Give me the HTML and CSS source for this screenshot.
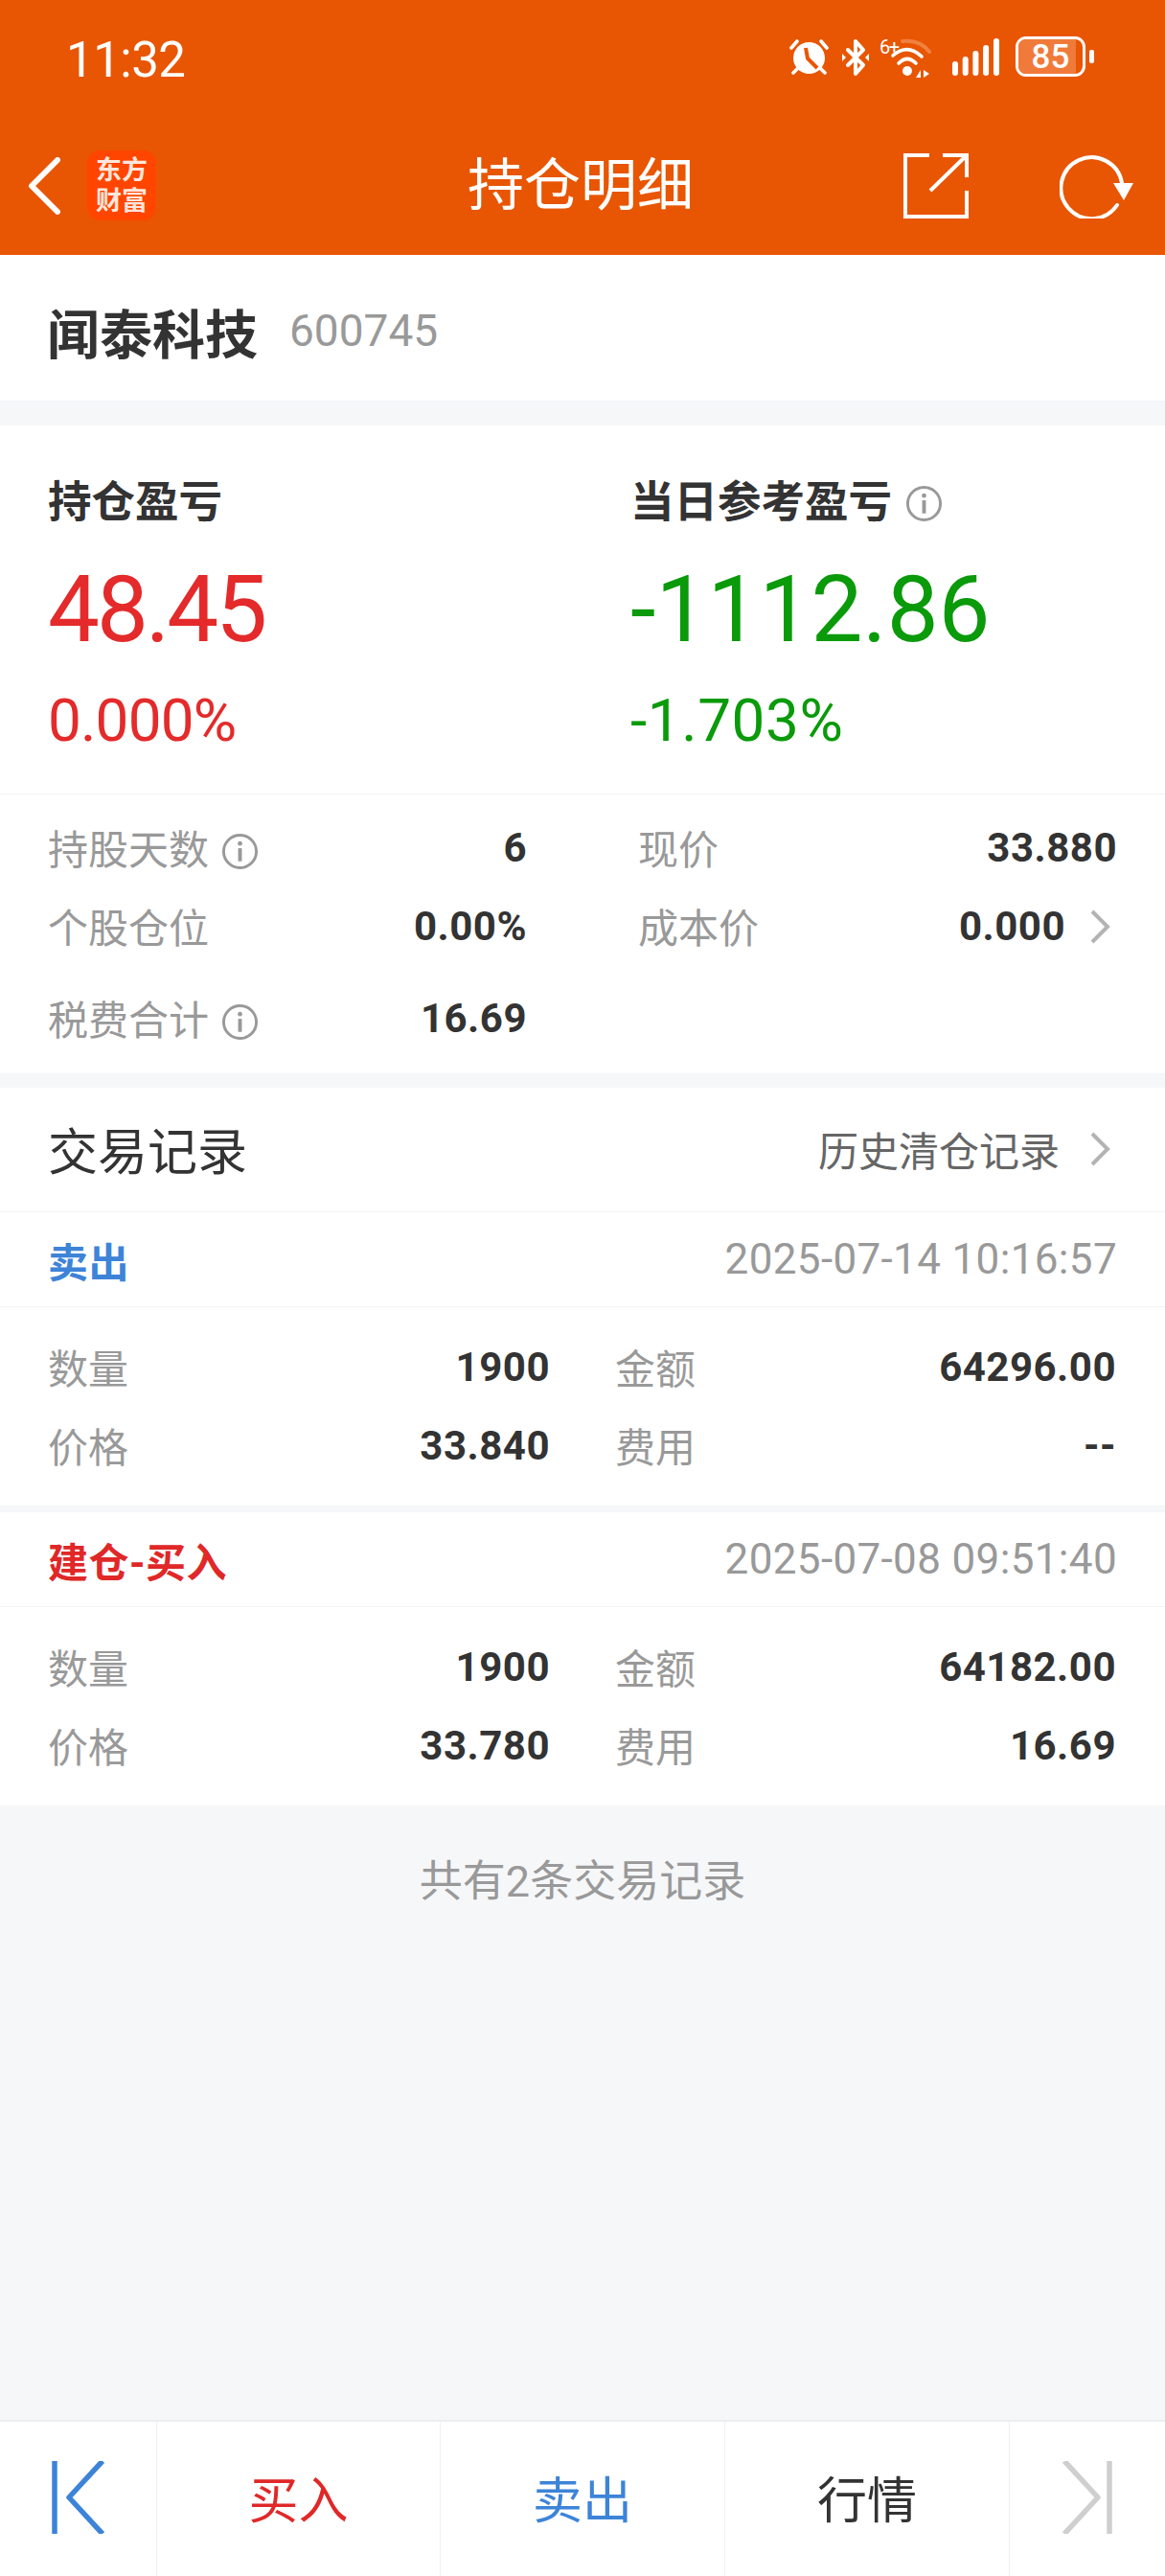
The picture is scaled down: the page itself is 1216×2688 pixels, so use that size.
FILE: index.html
```html
<!DOCTYPE html>
<html lang="zh-CN">
<head>
  <meta charset="UTF-8">
  <meta name="viewport" content="width=device-width, initial-scale=1.0">
  <title>持仓明细</title>
  <link rel="stylesheet" href="styles.css">
</head>
<body>
  <div class="page">
    <!-- Orange header -->
    <header class="top">
      <div class="status">
        <span class="clock">11:32</span>
        <div class="status-icons">
          <svg class="ic-alarm" width="41" height="38" viewBox="0 0 41 38" fill="none">
            <path d="M2 10 L8 3 M39 10 L33 3 M4 36 L8 32 M37 36 L33 32" stroke="#fff" stroke-width="3.6" stroke-linecap="round"/>
            <circle cx="20.5" cy="20.5" r="16.5" fill="#fff"/>
            <path d="M17 10 L19 21 L29 31" stroke="#e85603" stroke-width="4" fill="none"/>
          </svg>
          <svg class="ic-bt" width="28" height="40" viewBox="0 0 28 40" fill="none">
            <path d="M6 12 L22 28 L14 37 L14 3 L22 12 L6 28" stroke="#fff" stroke-width="4" stroke-linejoin="round" stroke-linecap="round"/>
            <path d="M0 16 L4 20 L0 24 Z M28 16 L24 20 L28 24 Z" fill="#fff"/>
          </svg>
          <div class="wifi">
            <span class="wifi-6">6+</span>
            <svg width="54" height="42" viewBox="0 0 54 42" fill="none">
              <path d="M24 3 Q42 1 52 14" stroke="#f0803f" stroke-width="4" stroke-linecap="round"/>
              <path d="M14 18 Q29 5 44 19" stroke="#fff" stroke-width="3.6" stroke-linecap="round"/>
              <path d="M20 26 Q29 17 38 26" stroke="#fff" stroke-width="3.6" stroke-linecap="round"/>
              <circle cx="29" cy="34" r="5" fill="#fff"/>
              <path d="M38 41 L43 33 V41 Z M46 33 L52 37 L46 41 Z" fill="#fff"/>
            </svg>
          </div>
          <svg class="ic-signal" width="49" height="39" viewBox="0 0 49 39" fill="#fff">
            <rect x="0" y="24" width="6" height="15" rx="3"/>
            <rect x="10.7" y="19" width="6" height="20" rx="3"/>
            <rect x="21.4" y="13" width="6" height="26" rx="3"/>
            <rect x="32.1" y="7" width="6" height="32" rx="3"/>
            <rect x="43" y="0" width="6" height="39" rx="3"/>
          </svg>
          <div class="battery">
            <div class="battery-body"><span class="battery-fill"></span><span class="battery-num">85</span></div>
            <span class="battery-tip"></span>
          </div>
        </div>
      </div>
      <div class="nav">
        <div class="nav-left">
          <svg width="34" height="60" viewBox="0 0 34 60" fill="none">
            <path d="M31 3 L4 30 L31 57" stroke="#fff" stroke-width="6" stroke-linecap="round" stroke-linejoin="round"/>
          </svg>
          <div class="logo"><span>东方<br>财富</span></div>
        </div>
        <h1>持仓明细</h1>
        <div class="nav-right">
          <svg width="68" height="68" viewBox="0 0 68 68" fill="none" stroke="#fff" stroke-width="4">
            <path d="M27 2 H2 V66 H66 V39"/>
            <path d="M41 2 H66 V25"/>
            <path d="M28 39 L66 2"/>
          </svg>
          <svg width="77" height="68" viewBox="0 0 77 68" fill="none">
            <path d="M65 31 A32 32 0 1 0 60 54" stroke="#fff" stroke-width="4" stroke-linecap="round"/>
            <path d="M56 31 H77 L67 49 Z" fill="#fff"/>
          </svg>
        </div>
      </div>
    </header>

    <section class="stock">
      <span class="stock-name">闻泰科技</span>
      <span class="stock-code">600745</span>
    </section>

    <!-- Profit summary -->
    <section class="card summary">
      <div class="pnl">
        <div class="pnl-col">
          <div class="pnl-label">持仓盈亏</div>
          <div class="pnl-value up">48.45</div>
          <div class="pnl-rate up">0.000%</div>
        </div>
        <div class="pnl-col">
          <div class="pnl-label">当日参考盈亏
            <svg class="info" viewBox="0 0 40 40" fill="none"><circle cx="20" cy="20" r="17.5" stroke="#999" stroke-width="3"/><circle cx="20" cy="11.5" r="2.4" fill="#999"/><rect x="18" y="16.5" width="4" height="14" fill="#999"/></svg>
          </div>
          <div class="pnl-value down">-1112.86</div>
          <div class="pnl-rate down">-1.703%</div>
        </div>
      </div>
      <div class="facts">
        <div class="fact">
          <span class="key">持股天数<svg class="info" viewBox="0 0 40 40" fill="none"><circle cx="20" cy="20" r="17.5" stroke="#999" stroke-width="3"/><circle cx="20" cy="11.5" r="2.4" fill="#999"/><rect x="18" y="16.5" width="4" height="14" fill="#999"/></svg></span>
          <span class="val">6</span>
        </div>
        <div class="fact">
          <span class="key">现价</span>
          <span class="val">33.880</span>
        </div>
        <div class="fact">
          <span class="key">个股仓位</span>
          <span class="val">0.00%</span>
        </div>
        <div class="fact">
          <span class="key">成本价</span>
          <span class="val val-link">0.000
            <svg class="chev chev-near" width="24" height="36" viewBox="0 0 24 36" fill="none"><path d="M4 2 L20 18 L4 34" stroke="#b3b3b3" stroke-width="4"/></svg>
          </span>
        </div>
        <div class="fact fact-last">
          <span class="key">税费合计<svg class="info" viewBox="0 0 40 40" fill="none"><circle cx="20" cy="20" r="17.5" stroke="#999" stroke-width="3"/><circle cx="20" cy="11.5" r="2.4" fill="#999"/><rect x="18" y="16.5" width="4" height="14" fill="#999"/></svg></span>
          <span class="val">16.69</span>
        </div>
      </div>
    </section>

    <!-- Trade records -->
    <section class="card trades">
      <div class="trades-head">
        <span class="trades-title">交易记录</span>
        <span class="trades-link">历史清仓记录<svg class="chev" width="24" height="36" viewBox="0 0 24 36" fill="none"><path d="M4 2 L20 18 L4 34" stroke="#b3b3b3" stroke-width="4"/></svg></span>
      </div>

      <div class="trade">
        <div class="trade-top">
          <span class="trade-type sell">卖出</span>
          <span class="trade-time">2025-07-14 10:16:57</span>
        </div>
        <div class="trade-grid">
          <div class="fact"><span class="key">数量</span><span class="val">1900</span></div>
          <div class="fact"><span class="key">金额</span><span class="val">64296.00</span></div>
          <div class="fact"><span class="key">价格</span><span class="val">33.840</span></div>
          <div class="fact"><span class="key">费用</span><span class="val">--</span></div>
        </div>
      </div>

      <div class="trade trade-next">
        <div class="trade-top">
          <span class="trade-type buy">建仓-买入</span>
          <span class="trade-time">2025-07-08 09:51:40</span>
        </div>
        <div class="trade-grid">
          <div class="fact"><span class="key">数量</span><span class="val">1900</span></div>
          <div class="fact"><span class="key">金额</span><span class="val">64182.00</span></div>
          <div class="fact"><span class="key">价格</span><span class="val">33.780</span></div>
          <div class="fact"><span class="key">费用</span><span class="val">16.69</span></div>
        </div>
      </div>
    </section>

    <div class="total">共有2条交易记录</div>

    <!-- Bottom bar -->
    <nav class="bottom">
      <div class="bottom-cell">
        <svg width="55" height="76" viewBox="0 0 55 76" fill="none" stroke="#3d84d8" stroke-width="5.5"><path d="M3 0 V76"/><path d="M53 0 L18 38 L53 76" stroke-linejoin="round"/></svg>
      </div>
      <div class="bottom-cell buy">买入</div>
      <div class="bottom-cell sell">卖出</div>
      <div class="bottom-cell">行情</div>
      <div class="bottom-cell">
        <svg width="52" height="76" viewBox="0 0 52 76" fill="none" stroke="#cfcfcf" stroke-width="5.5"><path d="M49 0 V76"/><path d="M2 0 L37 38 L2 76" stroke-linejoin="round"/></svg>
      </div>
    </nav>
  </div>
</body>
</html>
```

FILE: styles.css
```css
* {
  box-sizing: border-box;
}
body {
  margin: 0;
  padding: 0;
  font-family: Roboto, "Noto Sans CJK SC", sans-serif;
  background: #f6f7f9;
  color: #333;
}
.page {
  width: 1216px;
  height: 2688px;
  display: flex;
  flex-direction: column;
  overflow: hidden;
}
.top {
  height: 266px;
  background: #e85603;
  color: #fff;
  flex: none;
}
.status {
  height: 124px;
  padding: 39px 0 0 69px;
  display: flex;
  justify-content: space-between;
}
.clock {
  font-size: 51px;
  line-height: 48px;
  letter-spacing: -0.5px;
}
.status-icons {
  display: flex;
  align-items: flex-start;
  padding: 3px 74px 0 0;
  margin-top: -2px;
}
.ic-bt {
  margin-left: 14px;
}
.wifi {
  position: relative;
  margin-left: 11px;
  height: 42px;
}
.wifi-6 {
  position: absolute;
  left: 0;
  top: -3px;
  font-size: 20px;
  line-height: 24px;
  letter-spacing: -1.5px;
}
.ic-signal {
  margin-left: 22px;
}
.battery {
  display: flex;
  align-items: center;
  gap: 4px;
  margin: -2px 0 0 17px;
}
.battery-body {
  position: relative;
  width: 73px;
  height: 42px;
  border: 3px solid #fff;
  border-radius: 11px;
  overflow: hidden;
  display: flex;
  align-items: center;
  justify-content: center;
}
.battery-fill {
  position: absolute;
  left: 0;
  top: 0;
  bottom: 0;
  width: 90%;
  background: #f07a3a;
}
.battery-num {
  position: relative;
  font-size: 35px;
  font-weight: 500;
}
.battery-tip {
  width: 5px;
  height: 14px;
  background: #fff;
  border-radius: 2px;
}
.nav {
  height: 142px;
  padding: 0 33px 3px 29px;
  display: grid;
  grid-template-columns: 1fr auto 1fr;
  align-items: center;
}
.nav h1 {
  margin: 0;
  font-size: 59px;
  line-height: 60px;
  font-weight: 400;
}
.nav-left {
  display: flex;
  align-items: center;
  gap: 28px;
}
.logo {
  width: 72px;
  height: 73px;
  background: #ff4500;
  border-radius: 14px;
  display: flex;
  align-items: center;
  justify-content: center;
  text-align: center;
  font-size: 27px;
  line-height: 32px;
  font-weight: 700;
  color: #ffe6dc;
}
.nav-right {
  display: flex;
  justify-content: flex-end;
  gap: 95px;
}
.stock {
  height: 152px;
  flex: none;
  background: #fff;
  display: flex;
  align-items: center;
  gap: 33px;
  padding: 6px 49px 0;
}
.stock-name {
  font-size: 55px;
  font-weight: 700;
}
.stock-code {
  font-size: 46px;
  color: #999;
}
.card {
  background: #fff;
  flex: none;
}
.summary {
  margin-top: 26px;
}
.pnl {
  height: 385px;
  display: grid;
  grid-template-columns: 608px 1fr;
  padding: 53px 50px 0;
  border-bottom: 1px solid #f2f2f2;
}
.pnl-label {
  font-size: 45.5px;
  line-height: 56px;
  font-weight: 700;
  display: flex;
  align-items: center;
  gap: 14px;
}
.pnl-value {
  font-size: 96px;
  line-height: 110px;
  margin-top: 28px;
}
.pnl-rate {
  font-size: 62px;
  line-height: 70px;
  margin-top: 26px;
}
.up {
  color: #e42a2a;
  letter-spacing: -0.8px;
}
.pnl-value.up {
  letter-spacing: -3px;
}
.down {
  color: #0a9a0a;
  letter-spacing: 0.6px;
}
.pnl-value.down {
  letter-spacing: 0;
}
.info {
  width: 39px;
  height: 39px;
  flex: none;
}
.key .info {
  margin-left: 13px;
  vertical-align: -6px;
}
.facts {
  display: grid;
  grid-template-columns: 500px 500px;
  grid-auto-rows: 82px;
  column-gap: 116px;
  padding: 16px 50px 0;
  height: 291px;
}
.fact {
  height: 82px;
  display: flex;
  justify-content: space-between;
  align-items: center;
}
.fact-last {
  margin-top: 14px;
}
.key {
  font-size: 42px;
  color: #999;
  padding-bottom: 5px;
}
.val {
  font-size: 42px;
  font-weight: 700;
  color: #333;
  letter-spacing: 0.5px;
  padding-bottom: 3px;
}
.val-link {
  display: flex;
  align-items: center;
}
.chev {
  margin: 0 6px 0 30px;
  flex: none;
}
.chev-near {
  margin-left: 24px;
}
.trades {
  margin-top: 15px;
}
.trades-head {
  height: 130px;
  padding: 0 50px 2px;
  display: flex;
  justify-content: space-between;
  align-items: center;
  border-bottom: 1px solid #f4f4f4;
}
.trades-title {
  font-size: 52px;
}
.trades-link {
  font-size: 42px;
  color: #666;
  display: flex;
  align-items: center;
}
.trade-top {
  height: 99px;
  padding: 0 50px;
  display: flex;
  justify-content: space-between;
  align-items: center;
  border-bottom: 1px solid #f4f4f4;
}
.trade-next {
  border-top: 7px solid #f6f7f9;
}
.trade-type {
  font-size: 42px;
  font-weight: 700;
  letter-spacing: 0.5px;
}
.sell {
  color: #3d84d8;
}
.buy {
  color: #e02828;
}
.trade-time {
  font-size: 44px;
  letter-spacing: 0.35px;
  color: #999;
}
.trade-grid {
  display: grid;
  grid-template-columns: 524px 523px;
  column-gap: 68px;
  padding: 23px 51px 20px 50px;
}
.total {
  height: 96px;
  margin-top: 32px;
  text-align: center;
  font-size: 45px;
  line-height: 96px;
  color: #999;
}
.bottom {
  margin-top: auto;
  height: 163px;
  background: #fff;
  border-top: 2px solid #ebedf0;
  display: grid;
  grid-template-columns: 164px 296px 297px 297px 1fr;
}
.bottom-cell {
  display: flex;
  align-items: center;
  justify-content: center;
  font-size: 52px;
  padding-bottom: 4px;
  border-right: 1px solid #f0f0f0;
}
.bottom-cell:last-child {
  border-right: none;
}
```
